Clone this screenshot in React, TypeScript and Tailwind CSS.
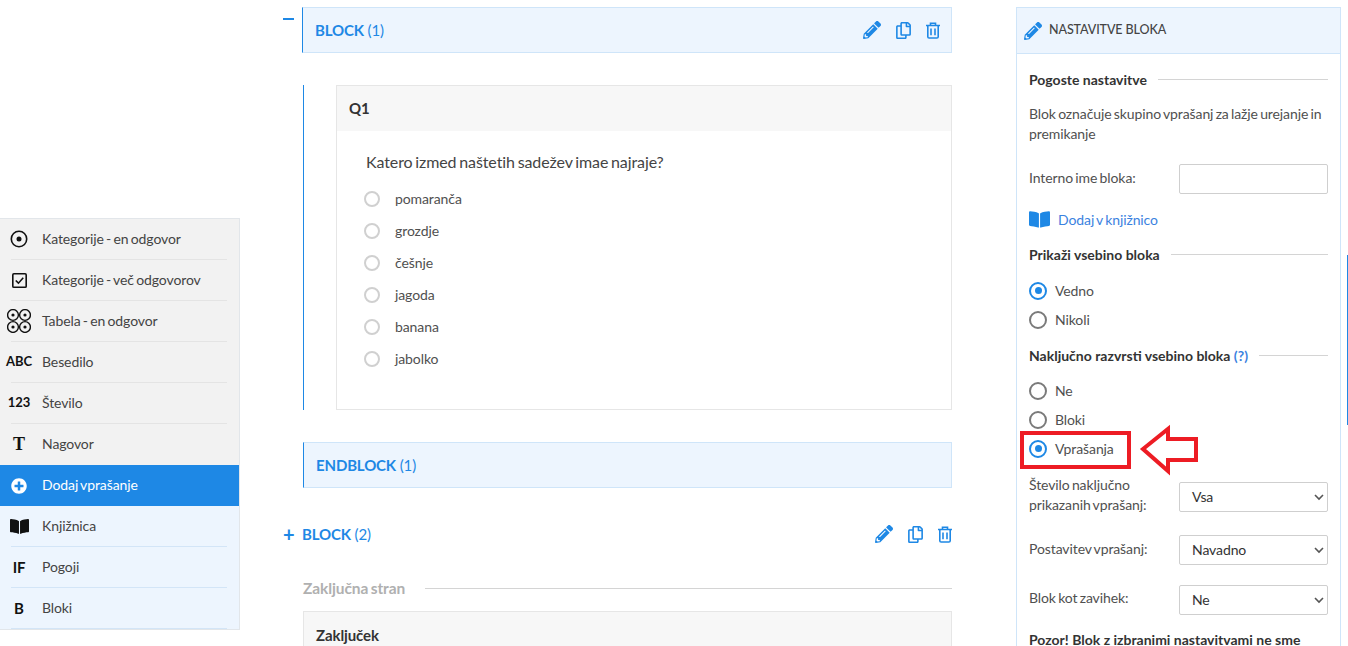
import React from 'react';
import { FaBookOpen, FaPencilAlt, FaPlusCircle, FaRegCopy } from 'react-icons/fa';

const TrashIcon = () => (
  <svg width="16" height="17" viewBox="0 0 16 17" fill="none" stroke="currentColor" strokeWidth="1.6">
    <path d="M1 3.5h14M5.5 3.2V1.3h5v1.9M2.8 3.5v11.2a1.3 1.3 0 0 0 1.3 1.3h7.8a1.3 1.3 0 0 0 1.3-1.3V3.5" />
    <path d="M6 6.5v6.8M10 6.5v6.8" />
  </svg>
);

const TableIcon = () => (
  <svg width="24" height="24" viewBox="0 0 24 24" fill="none" stroke="#111" strokeWidth="1.4">
    {[6, 18].map((cy) =>
      [6, 18].map((cx) => (
        <g key={`${cx}-${cy}`}>
          <circle cx={cx} cy={cy} r="5.4" />
          <circle cx={cx} cy={cy} r="1.6" fill="#111" stroke="none" />
        </g>
      )),
    )}
  </svg>
);

const CheckIcon = () => (
  <svg width="15" height="15" viewBox="0 0 14 14" fill="none" stroke="#111">
    <rect x="0.75" y="0.75" width="12.5" height="12.5" rx="1" strokeWidth="1.5" />
    <path d="M3.5 7l2.5 2.5L10.5 4.5" strokeWidth="1.5" />
  </svg>
);

const RadioDotIcon = () => (
  <svg width="18" height="18" viewBox="0 0 18 18" fill="none" stroke="#111">
    <circle cx="9" cy="9" r="7.7" strokeWidth="1.6" />
    <circle cx="9" cy="9" r="2.5" fill="#111" stroke="none" />
  </svg>
);

const toolbox = [
  { label: 'Kategorije - en odgovor', icon: <RadioDotIcon /> },
  { label: 'Kategorije - več odgovorov', icon: <CheckIcon /> },
  { label: 'Tabela - en odgovor', icon: <TableIcon /> },
  { label: 'Besedilo', icon: <span className="text-[13px] font-bold text-[#111]">ABC</span> },
  { label: 'Število', icon: <span className="text-[13px] font-bold text-[#111]">123</span> },
  { label: 'Nagovor', icon: <span className="font-['Liberation_Serif',serif] text-[18px] font-bold text-[#111]">T</span> },
];

const actions = [
  { label: 'Dodaj vprašanje', icon: <FaPlusCircle className="text-white" size={16} />, active: true },
  { label: 'Knjižnica', icon: <FaBookOpen className="text-[#111]" size={19} /> },
  { label: 'Pogoji', icon: <span className="text-[15px] font-bold text-[#111]">IF</span> },
  { label: 'Bloki', icon: <span className="text-[15px] font-bold text-[#111]">B</span> },
];

const answers = ['pomaranča', 'grozdje', 'češnje', 'jagoda', 'banana', 'jabolko'];

const BlockActions = () => (
  <div className="-mr-px flex items-center text-[#1e88e5]">
    <FaPencilAlt size={18} />
    <FaRegCopy className="ml-[14px] mr-[13px]" size={17} />
    <TrashIcon />
  </div>
);

const BlockTitle = ({ name, index }: { name: string; index: number }) => (
  <span className="tracking-[-0.15px] [word-spacing:0px]"><b>{name}</b> ({index})</span>
);

const Section = ({ children }: { children: React.ReactNode }) => (
  <div className="flex h-5 items-center gap-[11px] text-[14px] font-bold tracking-normal text-[#333] [word-spacing:0px]">
    <span className="whitespace-nowrap">{children}</span>
    <span className="h-px flex-1 bg-[#d4d4d4]" />
  </div>
);

const Radio = ({ label, checked = false }: { label: string; checked?: boolean }) => (
  <div className="flex h-[29px] items-center gap-2 text-[14px] text-[#505050]">
    <span className={`flex h-[18px] w-[18px] items-center justify-center rounded-full border-2 ${checked ? 'border-[#1e88e5]' : 'border-[#7a7a7a]'}`}>
      {checked && <span className="h-[7px] w-[7px] rounded-full bg-[#1e88e5]" />}
    </span>
    {label}
  </div>
);

const SelectBox = ({ value, className = '' }: { value: string; className?: string }) => (
  <div className={`relative h-[30px] w-[149px] rounded-[2px] border border-[#cfcfcf] bg-white pl-3 leading-[28px] text-[#333] ${className}`}>
    {value}
    <svg className="absolute right-[3px] top-[10px]" width="10" height="8" viewBox="0 0 10 8" fill="none" stroke="#555" strokeWidth="1.6">
      <path d="M1 2l4 4 4-4" />
    </svg>
  </div>
);

export default function App() {
  return (
    <div className="relative flex h-[646px] w-[1348px] overflow-hidden bg-white font-['Lato','Noto_Sans',sans-serif] tracking-[-0.1px] [word-spacing:-1.2px]">
      {/* Question toolbox */}
      <aside className="mt-[218px] h-[412px] w-[240px] shrink-0 border-y border-r border-[#e2e6ea] bg-[#f2f2f2] text-[14px] text-[#444]">
        {toolbox.map((item, i) => (
          <div key={item.label} className="flex h-[41px] items-center">
            <div className={`ml-[11px] flex h-full w-[216px] items-center ${i < toolbox.length - 1 ? 'border-b border-[#e4e4e4]' : ''}`}>
              <span className="-ml-[11px] flex w-[38px] shrink-0 justify-center">{item.icon}</span>
              <span className="mb-[2px] ml-1">{item.label}</span>
            </div>
          </div>
        ))}
        {actions.map((item) => (
          <div key={item.label} className={`flex h-[41px] items-center ${item.active ? 'bg-[#1e88e5] text-white' : 'bg-[#edf5fe]'}`}>
            <div className={`ml-[11px] flex h-full w-[216px] items-center ${item.active ? '' : 'border-b border-[#d3e5f7]'}`}>
              <span className="-ml-[11px] flex w-[38px] shrink-0 justify-center">{item.icon}</span>
              <span className="mb-[2px] ml-1">{item.label}</span>
            </div>
          </div>
        ))}
      </aside>

      {/* Survey canvas */}
      <main className="ml-[43px] w-[669px] shrink-0 pt-[7px]">
        <div className="flex">
          <div className="mt-[11px] h-[2px] w-[11px] bg-[#1e88e5]" />
          <div className="ml-2 flex h-[46px] flex-1 items-center justify-between border border-l-[#1e88e5] border-[#cfe5f9] bg-[#edf5fe] pl-3 pr-[11px] text-[15px] text-[#1e88e5]">
            <BlockTitle name="BLOCK" index={1} />
            <BlockActions />
          </div>
        </div>

        <div className="ml-5 mt-[32px] h-[325px] border-l border-[#1e88e5] pl-[32px]">
          <div className="h-full border border-[#e6e6e6]">
            <div className="flex h-[45px] items-center bg-[#f7f7f7] pl-3 text-[15px] font-bold text-[#333]">Q1</div>
            <div className="pl-[29px] pt-[19px]">
              <div className="h-[24px] text-[16px] leading-6 text-[#444]">Katero izmed naštetih sadežev imae najraje?</div>
              <div className="mt-[8px] -ml-[2px]">
                {answers.map((a) => (
                  <div key={a} className="flex h-[32px] items-center gap-[15px] text-[14px] text-[#505050]">
                    <span className="mt-[2px] h-4 w-4 rounded-full border-2 border-[#d0d0d0]" />
                    {a}
                  </div>
                ))}
              </div>
            </div>
          </div>
        </div>

        <div className="ml-5 mt-[32px] flex h-[46px] items-center border border-l-[#1e88e5] border-[#cfe5f9] bg-[#edf5fe] pl-3 text-[15px] text-[#1e88e5]">
          <BlockTitle name="ENDBLOCK" index={1} />
        </div>

        <div className="mt-[35px] flex h-[22px] items-center justify-between text-[15px] text-[#1e88e5]">
          <div className="flex items-center">
            <span className="w-[19px] text-[20px] font-bold leading-none">+</span>
            <BlockTitle name="BLOCK" index={2} />
          </div>
          <BlockActions />
        </div>

        <div className="ml-5 mt-[33px] flex h-5 items-center gap-[20px] text-[15.5px] font-bold text-[#b0b0b0]">
          <span className="mt-[2px]">Zaključna stran</span>
          <span className="h-px flex-1 bg-[#d4d4d4]" />
        </div>
        <div className="ml-5 mt-[13px] h-[60px] border border-[#e6e6e6] bg-[#f7f7f7] pl-3 pt-[12px] text-[15px] font-bold text-[#333]">Zaključek</div>
      </main>

      {/* Block settings */}
      <section className="ml-[64px] mt-[7px] h-[700px] w-[325px] shrink-0 border border-[#cfe5f9]">
        <div className="flex h-[46px] items-center gap-[7px] border-b border-[#cfe5f9] bg-[#edf5fe] pl-[7px] text-[12.5px] font-medium text-[#444] [word-spacing:0px]">
          <FaPencilAlt className="text-[#1e88e5]" size={18} />
          NASTAVITVE BLOKA
        </div>
        <div className="pl-3 pr-3 pt-[15px]">
          <Section>Pogoste nastavitve</Section>
          <p className="mt-[15px] text-[14px] leading-5 text-[#505050]">Blok označuje skupino vprašanj za lažje urejanje in premikanje</p>
          <div className="mt-5 flex items-center justify-between text-[14px] text-[#505050]">
            <span className="mb-[3px]">Interno ime bloka:</span>
            <div className="h-[30px] w-[149px] rounded-[2px] border border-[#cfcfcf]" />
          </div>
          <div className="mt-[15px] flex h-5 items-center gap-[8px] text-[14px] text-[#3b82e0]">
            <FaBookOpen className="text-[#1e88e5]" size={21} />
            Dodaj v knjižnico
          </div>
          <div className="mt-[15px]"><Section>Prikaži vsebino bloka</Section></div>
          <div className="mt-3">
            <Radio label="Vedno" checked />
            <Radio label="Nikoli" />
          </div>
          <div className="mt-[11px]">
            <Section>Naključno razvrsti vsebino bloka <span className="text-[#3b82e0]">(?)</span></Section>
          </div>
          <div className="mt-[11px]">
            <Radio label="Ne" />
            <Radio label="Bloki" />
            <Radio label="Vprašanja" checked />
          </div>

          <div className="mt-3 flex items-start justify-between text-[14px] leading-5 text-[#505050]">
            <div>Število naključno<br />prikazanih vprašanj:</div>
            <SelectBox className="mt-[7px]" value="Vsa" />
          </div>
          <div className="mt-5 flex items-start justify-between text-[14px] leading-5 text-[#505050]">
            <div className="mt-1">Postavitev vprašanj:</div>
            <SelectBox value="Navadno" />
          </div>
          <div className="mt-5 flex items-start justify-between text-[14px] leading-5 text-[#505050]">
            <div className="mt-[3px]">Blok kot zavihek:</div>
            <SelectBox value="Ne" />
          </div>
          <p className="mt-[15px] text-[14px] font-bold leading-5 tracking-normal text-[#333] [word-spacing:0px]">Pozor! Blok z izbranimi nastavitvami ne sme</p>
        </div>
      </section>

      {/* Annotation drawn over the settings panel */}
      <div className="absolute left-[1020px] top-[431px] h-[38px] w-[111px] border-[4px] border-[#ed1c24]" />
      <svg className="absolute left-[1138px] top-[424px]" width="64" height="52" viewBox="0 0 64 52" fill="none" stroke="#ed1c24" strokeWidth="4">
        <path d="M5 25L30 5v10h28v21H30v11z" />
      </svg>

      {/* Scrollbar thumb */}
      <div className="absolute left-[1347px] top-[255px] h-[170px] w-px bg-[#1e88e5]" />
    </div>
  );
}
